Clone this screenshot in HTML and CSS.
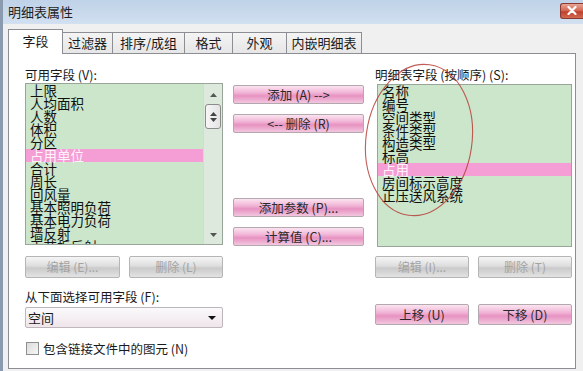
FILE: index.html
```html
<!DOCTYPE html>
<html lang="zh">
<head>
<meta charset="utf-8">
<link rel="stylesheet" href="styles.css">
</head>
<body>
<div class="window">
  <div class="titlebar">
    <span class="title">明细表属性</span>
    <span class="close"><svg width="10" height="9" viewBox="0 0 10 9"><path d="M1.5 1 L8.5 8 M8.5 1 L1.5 8" stroke="#fff" stroke-width="2.2" stroke-linecap="round"/></svg></span>
  </div>
  <div class="tabs">
    <div class="tab active">字段</div>
    <div class="tab t2">过滤器</div>
    <div class="tab t3">排序/成组</div>
    <div class="tab t4">格式</div>
    <div class="tab t5">外观</div>
    <div class="tab t6">内嵌明细表</div>
  </div>
  <div class="panel">
    <div class="col left">
      <div class="label">可用字段 (V):</div>
      <div class="list llist">
        <div class="items">
          <div class="item">上限</div>
          <div class="item">人均面积</div>
          <div class="item">人数</div>
          <div class="item">体积</div>
          <div class="item">分区</div>
          <div class="item sel">占用单位</div>
          <div class="item">合计</div>
          <div class="item">周长</div>
          <div class="item">回风量</div>
          <div class="item">基本照明负荷</div>
          <div class="item">基本电力负荷</div>
          <div class="item">墙反射</div>
          <div class="item">天花板反射</div>
        </div>
        <div class="scroll">
          <svg class="arr" width="7" height="4" viewBox="0 0 7 4"><path d="M0 4 L3.5 0 L7 4Z" fill="#555"/></svg>
          <div class="thumb"><svg width="7" height="10" viewBox="0 0 7 10"><path d="M0 4 L3.5 0 L7 4Z M0 6 L3.5 10 L7 6Z" fill="#444"/></svg></div>
          <div class="spacer"></div>
          <svg class="arr" width="7" height="4" viewBox="0 0 7 4"><path d="M0 0 L3.5 4 L7 0Z" fill="#555"/></svg>
        </div>
      </div>
      <div class="btnrow r1">
        <div class="btn gray w95">编辑 (E)...</div>
        <div class="btn gray w94">删除 (L)</div>
      </div>
      <div class="label l2">从下面选择可用字段 (F):</div>
      <div class="select"><span>空间</span><svg width="8" height="4" viewBox="0 0 8 4"><path d="M0 0 L4 4 L8 0Z" fill="#111"/></svg></div>
      <div class="check"><span class="box"></span><span>包含链接文件中的图元 (N)</span></div>
    </div>
    <div class="col mid">
      <div class="btn pink m1">添加 (A) --&gt;</div>
      <div class="btn pink m2">&lt;-- 删除 (R)</div>
      <div class="btn pink m3">添加参数 (P)...</div>
      <div class="btn pink m2">计算值 (C)...</div>
    </div>
    <div class="col right">
      <div class="label rl">明细表字段 (按顺序) (S):</div>
      <div class="list rlist">
        <div class="items">
          <div class="item">名称</div>
          <div class="item">编号</div>
          <div class="item">空间类型</div>
          <div class="item">条件类型</div>
          <div class="item">构造类型</div>
          <div class="item">标高</div>
          <div class="item sel">占用</div>
          <div class="item">房间标示高度</div>
          <div class="item">正压送风系统</div>
        </div>
      </div>
      <div class="btnrow r1">
        <div class="btn gray w94">编辑 (I)...</div>
        <div class="btn gray w94">删除 (T)</div>
      </div>
      <div class="btnrow r2">
        <div class="btn pink w94 h21">上移 (U)</div>
        <div class="btn pink w94 h21">下移 (D)</div>
      </div>
    </div>
    <svg class="ellipse" width="130" height="170" viewBox="0 0 130 170"><ellipse cx="65" cy="85" rx="53" ry="76" transform="rotate(8 65 85)" fill="none" stroke="#b8403a" stroke-width="1.1" opacity="0.85"/></svg>
  </div>
</div>
</body>
</html>
```

FILE: styles.css
```css
* { box-sizing: border-box; }
html, body { margin: 0; padding: 0; }
body {
  width: 583px;
  height: 371px;
  overflow: hidden;
  font-family: "Noto Sans CJK SC", "DejaVu Sans", sans-serif;
  font-size: 12px;
  color: #1a1a1a;
  background: #f0f0f0;
}
.window {
  width: 583px;
  height: 371px;
  background: #f0f0f0;
  border-left: 3px solid #8a9bb0;
  position: relative;
}
.titlebar {
  height: 24px;
  background: linear-gradient(#bfd2e8, #d2e0f0);
  display: flex;
  align-items: center;
  justify-content: space-between;
  padding-left: 5px;
}
.title { font-size: 13px; color: #1e1e1e; line-height: 24px; }
.close {
  width: 23px;
  height: 16px;
  margin-top: -3px;
  border: 1px solid #8a3a30;
  border-right: none;
  border-radius: 3px 0 0 3px;
  background: linear-gradient(#e9a696, #d2614c 50%, #bf3f2b 55%, #d26a52);
  display: flex;
  align-items: center;
  justify-content: center;
}
.tabs {
  display: flex;
  align-items: flex-end;
  height: 29px;
  padding-left: 5px;
  position: relative;
  z-index: 2;
}
.tab {
  height: 21px;
  border: 1px solid #8c8e94;
  border-bottom: none;
  border-left: none;
  background: linear-gradient(#f4f4f4, #e6e6e6);
  font-size: 13px;
  line-height: 20px;
  text-align: center;
}
.tab.active {
  height: 25px;
  width: 55px;
  border-left: 1px solid #8c8e94;
  background: #fff;
  margin-bottom: -1px;
  line-height: 22px;
  padding-bottom: 2px;
}
.t2 { width: 50px; }
.t3 { width: 72px; }
.t4 { width: 48px; }
.t5 { width: 54px; }
.t6 { width: 75px; }
.panel {
  margin-left: 5px;
  width: 568px;
  height: 316px;
  border: 1px solid #8c8e94;
  background: #fff;
  display: grid;
  grid-template-columns: 198px 132px 197px;
  column-gap: 10px;
  padding: 12px 0 0 16px;
  position: relative;
}
.col { display: flex; flex-direction: column; }
.label { height: 17px; line-height: 17px; font-size: 12.5px; white-space: nowrap; }
.list {
  background: #cbe6cb;
  border: 1px solid #9aa59a;
  overflow: hidden;
  display: flex;
}
.llist { height: 162px; }
.rlist { height: 163px; margin-top: 1px; margin-left: 2px; }
.items { flex: 1; overflow: hidden; }
.item {
  height: 13px;
  line-height: 13px;
  font-size: 13.5px;
  padding-left: 4px;
  white-space: nowrap;
  color: #111;
}
.item.sel { background: #f49ed5; color: #fff2fb; }
.scroll {
  width: 19px;
  background: #dde9dd;
  border-left: 1px solid #d0dcd0;
  display: flex;
  flex-direction: column;
  align-items: center;
  padding: 9px 0 7px;
}
.thumb {
  margin-top: 7px;
  width: 16px;
  height: 25px;
  border: 1px solid #8c8c8c;
  border-radius: 3px;
  background: linear-gradient(90deg, #f6f6f6, #e4e4e4);
  display: flex;
  align-items: center;
  justify-content: center;
}
.spacer { flex: 1; }
.btnrow { display: flex; justify-content: space-between; }
.left .r1 { margin-top: 11px; }
.right .r1 { margin-top: 9px; }
.right .r2 { margin-top: 26px; }
.btn {
  height: 22px;
  border: 1px solid #b3a8ae;
  border-radius: 2px;
  font-size: 12px;
  line-height: 20px;
  text-align: center;
  white-space: nowrap;
}
.gray {
  background: linear-gradient(#f5f5f5, #dedede 45%, #cacaca 55%, #e3e3e3);
  color: #a3a3a3;
  border-color: #b5b5b5;
}
.pink {
  background: linear-gradient(#fbe4f0, #f1b4d6 40%, #e792c1 58%, #f3c7df);
  color: #2a2a2a;
}
.w95 { width: 95px; }
.w94 { width: 94px; }
.h21 { height: 21px; line-height: 19px; font-size: 12.5px; }
.mid .btn { width: 131px; height: 19px; line-height: 17px; font-size: 12.5px; }
.m1 { margin-top: 19px; }
.m2 { margin-top: 10px; }
.m3 { margin-top: 65px; }
.l2 { margin-top: 10px; height: 18px; }
.select {
  margin-top: 1px;
  height: 21px;
  border: 1px solid #bdb6ba;
  border-radius: 2px;
  background: linear-gradient(#fbfafb, #efe5ea);
  display: flex;
  align-items: center;
  justify-content: space-between;
  padding: 0 6px 0 2px;
  font-size: 13px;
}
.check {
  margin-top: 13px;
  display: flex;
  align-items: center;
  gap: 4px;
  white-space: nowrap;
  font-size: 12.5px;
  height: 14px;
}
.box {
  width: 13px;
  height: 13px;
  margin-left: 1px;
  border: 1px solid #8f8f8f;
  background: linear-gradient(135deg, #dcdcdc, #f6f6f6);
}
.ellipse {
  position: absolute;
  left: 345px;
  top: 1px;
}
```
